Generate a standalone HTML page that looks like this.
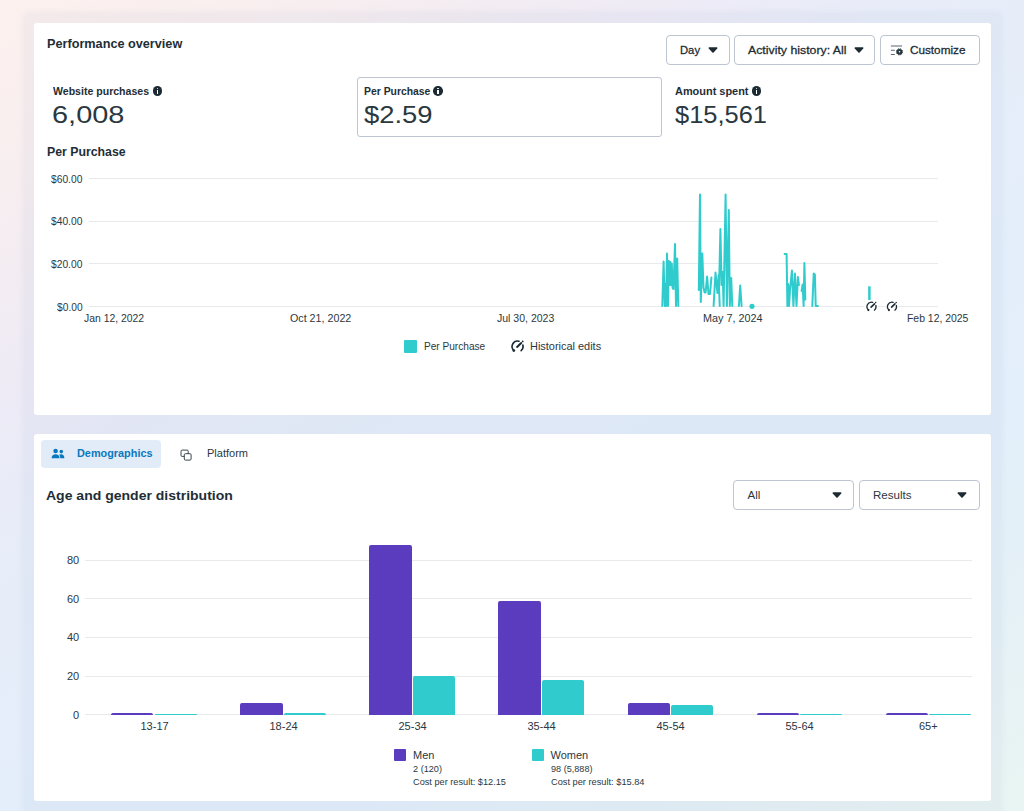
<!DOCTYPE html>
<html>
<head>
<meta charset="utf-8">
<title>Performance overview</title>
<style>
*{box-sizing:border-box;margin:0;padding:0}
html,body{width:1024px;height:811px;overflow:hidden}
body{
  font-family:"Liberation Sans",sans-serif;color:#1c2b33;position:relative;
  background:linear-gradient(150deg,#fcf1ee 0%,#f9efef 10%,#f3ecf2 20%,#eeebf6 28%,#e9ecf8 35%,#e6edf9 43%,#e4eefa 58%,#e3effa 71%,#e5f1f6 85%,#e9f5f2 100%);
}
.card{position:absolute;background:#fff;border-radius:3px}
.wrap{position:absolute;left:24px;top:13px;width:977px;height:820px;border-radius:6px;background:rgba(125,135,195,.06);box-shadow:0 0 5px 2px rgba(125,135,195,.06)}
#c1{left:34px;top:23px;width:957px;height:391.5px}
#c2{left:34px;top:434px;width:957px;height:367px}
.t{position:absolute;white-space:nowrap;line-height:1;transform-origin:0 50%;color:#2b3840}
.b{font-weight:bold;color:#1f2e36}
.h{-webkit-text-stroke:.8px #1c2b33}
.sb{-webkit-text-stroke:.28px #1c2b33;color:#1c2b33}
.btn{position:absolute;border:1px solid #bcc5d0;border-radius:4px;background:#fff}
.gl{position:absolute;height:1px;background:#e7e9eb}
.cv{position:absolute}
.info{position:absolute;width:9.6px;height:9.6px;margin:.2px;border-radius:50%;background:#1c2b33}
.info:before{content:"";position:absolute;left:4px;top:1.7px;width:1.6px;height:1.6px;background:#fff;border-radius:50%}
.info:after{content:"";position:absolute;left:4px;top:4px;width:1.6px;height:3.7px;background:#fff}
.bar{position:absolute;border-radius:2px 2px 0 0}
.m{background:#5b3bbe}
.w{background:#30cccd}
</style>
</head>
<body>

<div class="wrap"></div>
<!-- CARD 1 -->
<div class="card" id="c1"></div>
<div class="t b" style="left:47.2px;top:38px;font-size:12.5px;transform:scaleX(1.014)">Performance overview</div>

<div class="btn" style="left:666px;top:35px;width:64px;height:30px"></div>
<div class="t sb" style="left:680.0px;top:45.4px;font-size:11.5px;transform:scaleX(0.978)">Day</div>
<svg class="cv" style="left:707.6px;top:47.1px" width="10" height="6" viewBox="0 0 10 6"><path d="M1.2 .2h7.6a.7.7 0 0 1 .5 1.2L5.6 5.4a.8.8 0 0 1-1.2 0L.7 1.4A.7.7 0 0 1 1.2 .2z" fill="#1c2b33"/></svg>

<div class="btn" style="left:734px;top:35px;width:141px;height:30px"></div>
<div class="t sb" style="left:748.0px;top:45.4px;font-size:11.5px;transform:scaleX(1.071)">Activity history: All</div>
<svg class="cv" style="left:854.3px;top:47.1px" width="10" height="6" viewBox="0 0 10 6"><path d="M1.2 .2h7.6a.7.7 0 0 1 .5 1.2L5.6 5.4a.8.8 0 0 1-1.2 0L.7 1.4A.7.7 0 0 1 1.2 .2z" fill="#1c2b33"/></svg>

<div class="btn" style="left:880px;top:35px;width:99.5px;height:30px"></div>
<svg style="position:absolute;left:890px;top:44px" width="14" height="13" viewBox="0 0 14 13">
  <path d="M0.9 2h11.1M0.9 6.3h3.9M0.9 10.5h3.9" stroke="#59656f" stroke-width="1.1" fill="none"/>
  <circle cx="9.5" cy="7.8" r="2.9" fill="#26343c"/>
  <circle cx="9.5" cy="7.8" r="3.1" fill="none" stroke="#26343c" stroke-width="1" stroke-dasharray="1.45 .98"/>
  <circle cx="9.5" cy="7.8" r=".8" fill="#fff"/>
</svg>
<div class="t sb" style="left:910.0px;top:45.4px;font-size:11.5px;transform:scaleX(1.020)">Customize</div>

<!-- metrics -->
<div class="t b" style="left:53.3px;top:86px;font-size:11px;transform:scaleX(0.960)">Website purchases</div>
<div class="info" style="left:152.5px;top:86px"></div>
<div class="t" style="left:52.4px;top:103px;font-size:24px;transform:scaleX(1.206)">6,008</div>

<div class="btn" style="left:357px;top:77px;width:304.5px;height:60px;border-radius:3px"></div>
<div class="t b" style="left:363.7px;top:86px;font-size:11px;transform:scaleX(0.944)">Per Purchase</div>
<div class="info" style="left:433.2px;top:86px"></div>
<div class="t" style="left:364.1px;top:103px;font-size:24px;transform:scaleX(1.142)">$2.59</div>

<div class="t b" style="left:674.5px;top:86px;font-size:11px;transform:scaleX(0.994)">Amount spent</div>
<div class="info" style="left:751.5px;top:86px"></div>
<div class="t" style="left:675px;top:103px;font-size:24px;transform:scaleX(1.06)">$15,561</div>

<div class="t b" style="left:47.2px;top:145.9px;font-size:12px;transform:scaleX(1.025)">Per Purchase</div>

<!-- line chart -->
<div class="gl" style="left:89px;top:178px;width:849px"></div>
<div class="gl" style="left:89px;top:221px;width:849px"></div>
<div class="gl" style="left:89px;top:263px;width:849px"></div>
<div class="gl" style="left:89px;top:306px;width:849px"></div>
<div class="t yl" style="left:50.8px;top:174px;font-size:11px;transform:scaleX(0.933)">$60.00</div>
<div class="t yl" style="left:50.8px;top:216px;font-size:11px;transform:scaleX(0.933)">$40.00</div>
<div class="t yl" style="left:50.8px;top:259px;font-size:11px;transform:scaleX(0.933)">$20.00</div>
<div class="t yl" style="left:56.6px;top:302px;font-size:11px;transform:scaleX(0.930)">$0.00</div>

<div class="t" style="left:84.0px;top:313px;font-size:11px;transform:scaleX(0.945)">Jan 12, 2022</div>
<div class="t" style="left:289.5px;top:313px;font-size:11px;transform:scaleX(0.973)">Oct 21, 2022</div>
<div class="t" style="left:497.3px;top:313px;font-size:11px;transform:scaleX(0.956)">Jul 30, 2023</div>
<div class="t" style="left:702.5px;top:313px;font-size:11px;transform:scaleX(0.981)">May 7, 2024</div>
<div class="t" style="left:906.6px;top:313px;font-size:11px;transform:scaleX(0.947)">Feb 12, 2025</div>

<svg id="line" style="position:absolute;left:0;top:0" width="1024" height="420" viewBox="0 0 1024 420">
  <g fill="none" stroke="#30cccd" stroke-width="2" stroke-linejoin="round" stroke-linecap="round">
    <path d="M662.3 306 L663.6 261.5 L664.8 306 L665.3 284 L666 306 L667 253.5 L668 306 L668.8 261 L669.6 285 L670.3 262 L671 285 L671.8 263.5 L672.6 288 L673.5 289 L675 244 L676 306 L677.2 258.5 L678.3 306"/>
    <path d="M698.8 290 L700 194.5 L700.8 302 L702.3 253.5 L703.5 287.5 L704.6 292.5 L705.6 292.5 L707.1 276.5 L708.5 294 L710 294 L711.4 277.5"/>
    <path d="M713.6 306 L715.5 272.5 L717.4 293 L718.6 275 L719.7 306 M719 292 L720.4 229 L721.6 285 L722.6 272 L723.6 306 L724.3 265 L725.6 194.5 L726.9 306 L728.8 210 L729.8 306 L731.2 278 L732.3 306"/>
    <path d="M738.9 306 L740.2 285.5 L741.6 306"/>
    <path d="M784.6 254 L786.6 254 L787.4 306 L788.2 284 L789 306 L790 290 L791.9 270.5 L793.4 306 L794.9 273.5 L796.5 306 L797.9 277 L798.9 285"/>
    <path d="M801.6 291 L802.6 284.5 L803.6 306 L804.4 263 L805.3 299.5"/>
    <path d="M812.3 306 L813.7 273.5 L814.9 274.5 L815.7 306 L817.9 306"/>
    <path d="M869.4 286.3 L869.4 300" stroke-linecap="butt" stroke-width="2.5"/>
  </g>
  <circle cx="752" cy="306.3" r="2.6" fill="#30cccd"/>
  
  <rect x="864.5" y="301" width="13.5" height="11" fill="#fff"/>
  <rect x="885" y="301" width="13.5" height="11" fill="#fff"/>
  <g fill="none" stroke="#1c2b33" stroke-linecap="round" transform="translate(871.5,306.7) scale(.82)">
    <path d="M1.42 -5.31A5.5 5.5 0 0 0 -3.89 3.89" stroke-width="1.6"/>
    <path d="M5.31 -1.42A5.5 5.5 0 0 1 3.54 4.21" stroke-width="1.6"/>
    <path d="M-0.5 0.4L3.6 -3.4" stroke-width="2.1"/>
    <circle cx="5.1" cy="-5.1" r=".9" fill="#1c2b33" stroke="none"/>
    <circle cx="-3.79" cy="4.09" r="1.35" fill="#1c2b33" stroke="none"/>
  </g>
  <g fill="none" stroke="#1c2b33" stroke-linecap="round" transform="translate(892,306.7) scale(.82)">
    <path d="M1.42 -5.31A5.5 5.5 0 0 0 -3.89 3.89" stroke-width="1.6"/>
    <path d="M5.31 -1.42A5.5 5.5 0 0 1 3.54 4.21" stroke-width="1.6"/>
    <path d="M-0.5 0.4L3.6 -3.4" stroke-width="2.1"/>
    <circle cx="5.1" cy="-5.1" r=".9" fill="#1c2b33" stroke="none"/>
    <circle cx="-3.79" cy="4.09" r="1.35" fill="#1c2b33" stroke="none"/>
  </g>
  <g fill="none" stroke="#1c2b33" stroke-linecap="round" transform="translate(517.6,346.5)">
    <path d="M1.42 -5.31A5.5 5.5 0 0 0 -3.89 3.89" stroke-width="1.6"/>
    <path d="M5.31 -1.42A5.5 5.5 0 0 1 3.54 4.21" stroke-width="1.6"/>
    <path d="M-0.5 0.4L3.6 -3.4" stroke-width="2.1"/>
    <circle cx="5.1" cy="-5.1" r=".9" fill="#1c2b33" stroke="none"/>
    <circle cx="-3.79" cy="4.09" r="1.35" fill="#1c2b33" stroke="none"/>
  </g>
</svg>

<div style="position:absolute;left:404px;top:340px;width:13px;height:12.5px;background:#30cccd;border-radius:1px"></div>
<div class="t" style="left:423.7px;top:341px;font-size:11px;transform:scaleX(0.918)">Per Purchase</div>
<div class="t" style="left:530.3px;top:341px;font-size:11px;transform:scaleX(0.994)">Historical edits</div>

<!-- CARD 2 -->
<div class="card" id="c2"></div>
<div style="position:absolute;left:40.5px;top:440px;width:120.7px;height:28px;background:#e1ecf8;border-radius:4px"></div>
<svg style="position:absolute;left:51px;top:447px" width="14" height="13" viewBox="0 0 14 13">
  <circle cx="4.6" cy="4" r="2.3" fill="#0a78be"/>
  <path d="M0.6 11.3c0-2.6 1.8-4 4-4s4 1.4 4 4z" fill="#0a78be"/>
  <circle cx="10.3" cy="4.6" r="1.8" fill="#0a78be"/>
  <path d="M9.3 11.3c0-1.6-.4-2.7-1.2-3.5.6-.4 1.3-.6 2.1-.6 1.8 0 3.2 1.2 3.2 4.1z" fill="#0a78be"/>
</svg>
<div class="t b" style="left:76.5px;top:448px;font-size:11.5px;color:#0a78be;transform:scaleX(0.945)">Demographics</div>
<svg style="position:absolute;left:179.5px;top:448px" width="13" height="14" viewBox="0 0 13 14">
  <rect x="1" y="2.1" width="7.2" height="6.3" rx="1.1" fill="#fff" stroke="#3a474f" stroke-width="1"/>
  <rect x="4.3" y="5.7" width="6.8" height="6.4" rx="1.1" fill="#fff" stroke="#3a474f" stroke-width="1"/>
</svg>
<div class="t" style="left:206.5px;top:448px;font-size:11.5px;transform:scaleX(0.957)">Platform</div>

<div class="t b" style="left:46.3px;top:489.1px;font-size:13px;transform:scaleX(1.078)">Age and gender distribution</div>

<div class="btn" style="left:733px;top:480px;width:120.5px;height:30px"></div>
<div class="t" style="left:747.5px;top:489.5px;font-size:11.5px">All</div>
<svg class="cv" style="left:832.3px;top:492.2px" width="10" height="6" viewBox="0 0 10 6"><path d="M1.2 .2h7.6a.7.7 0 0 1 .5 1.2L5.6 5.4a.8.8 0 0 1-1.2 0L.7 1.4A.7.7 0 0 1 1.2 .2z" fill="#1c2b33"/></svg>
<div class="btn" style="left:859px;top:480px;width:120.5px;height:30px"></div>
<div class="t" style="left:872.5px;top:489.5px;font-size:11.5px;transform:scaleX(1.004)">Results</div>
<svg class="cv" style="left:957px;top:492.2px" width="10" height="6" viewBox="0 0 10 6"><path d="M1.2 .2h7.6a.7.7 0 0 1 .5 1.2L5.6 5.4a.8.8 0 0 1-1.2 0L.7 1.4A.7.7 0 0 1 1.2 .2z" fill="#1c2b33"/></svg>

<!-- bar chart -->
<div class="gl" style="left:85px;top:560px;width:887px"></div>
<div class="gl" style="left:85px;top:598px;width:887px"></div>
<div class="gl" style="left:85px;top:637px;width:887px"></div>
<div class="gl" style="left:85px;top:676px;width:887px"></div>
<div class="gl" style="left:85px;top:714px;width:887px"></div>
<div class="t" style="left:67px;top:555px;font-size:11px">80</div>
<div class="t" style="left:67px;top:593.5px;font-size:11px">60</div>
<div class="t" style="left:67px;top:632px;font-size:11px">40</div>
<div class="t" style="left:67px;top:671px;font-size:11px">20</div>
<div class="t" style="left:73px;top:709.5px;font-size:11px">0</div>

<div class="bar m" style="left:111px;top:713.4px;width:42px;height:1.3px"></div>
<div class="bar w" style="left:154.6px;top:713.5px;width:42.4px;height:1.2px"></div>
<div class="bar m" style="left:240px;top:703px;width:42.5px;height:11.7px"></div>
<div class="bar w" style="left:284.1px;top:712.5px;width:41.9px;height:2.2px"></div>
<div class="bar m" style="left:369px;top:545px;width:42.5px;height:169.7px"></div>
<div class="bar w" style="left:413.1px;top:676px;width:42.4px;height:38.7px"></div>
<div class="bar m" style="left:498px;top:600.5px;width:42.5px;height:114.2px"></div>
<div class="bar w" style="left:542.1px;top:679.5px;width:42.4px;height:35.2px"></div>
<div class="bar m" style="left:627.5px;top:703px;width:42px;height:11.7px"></div>
<div class="bar w" style="left:671.1px;top:705px;width:42.4px;height:9.7px"></div>
<div class="bar m" style="left:756.5px;top:713.4px;width:42px;height:1.3px"></div>
<div class="bar w" style="left:800.1px;top:713.5px;width:42.4px;height:1.2px"></div>
<div class="bar m" style="left:885.5px;top:713.4px;width:42px;height:1.3px"></div>
<div class="bar w" style="left:929.1px;top:713.5px;width:42.4px;height:1.2px"></div>

<div class="t xl" style="left:140.5px;top:721px;font-size:11px">13-17</div>
<div class="t xl" style="left:269.5px;top:721px;font-size:11px">18-24</div>
<div class="t xl" style="left:398.5px;top:721px;font-size:11px">25-34</div>
<div class="t xl" style="left:527.5px;top:721px;font-size:11px">35-44</div>
<div class="t xl" style="left:656.5px;top:721px;font-size:11px">45-54</div>
<div class="t xl" style="left:785.5px;top:721px;font-size:11px">55-64</div>
<div class="t xl" style="left:919px;top:721px;font-size:11px">65+</div>

<div style="position:absolute;left:394px;top:749px;width:12px;height:12px;background:#5b3bbe;border-radius:1px"></div>
<div class="t" style="left:413.0px;top:749.8px;font-size:11px">Men</div>
<div class="t" style="left:413.0px;top:764.5px;font-size:9px;transform:scaleX(1.016)">2 (120)</div>
<div class="t" style="left:413.0px;top:778px;font-size:9px;transform:scaleX(1.021)">Cost per result: $12.15</div>
<div style="position:absolute;left:531.7px;top:749px;width:12px;height:12px;background:#30cccd;border-radius:1px"></div>
<div class="t" style="left:550.5px;top:749.8px;font-size:11px">Women</div>
<div class="t" style="left:550.5px;top:764.5px;font-size:9px;transform:scaleX(1.011)">98 (5,888)</div>
<div class="t" style="left:550.5px;top:778px;font-size:9px;transform:scaleX(1.027)">Cost per result: $15.84</div>
</body>
</html>
